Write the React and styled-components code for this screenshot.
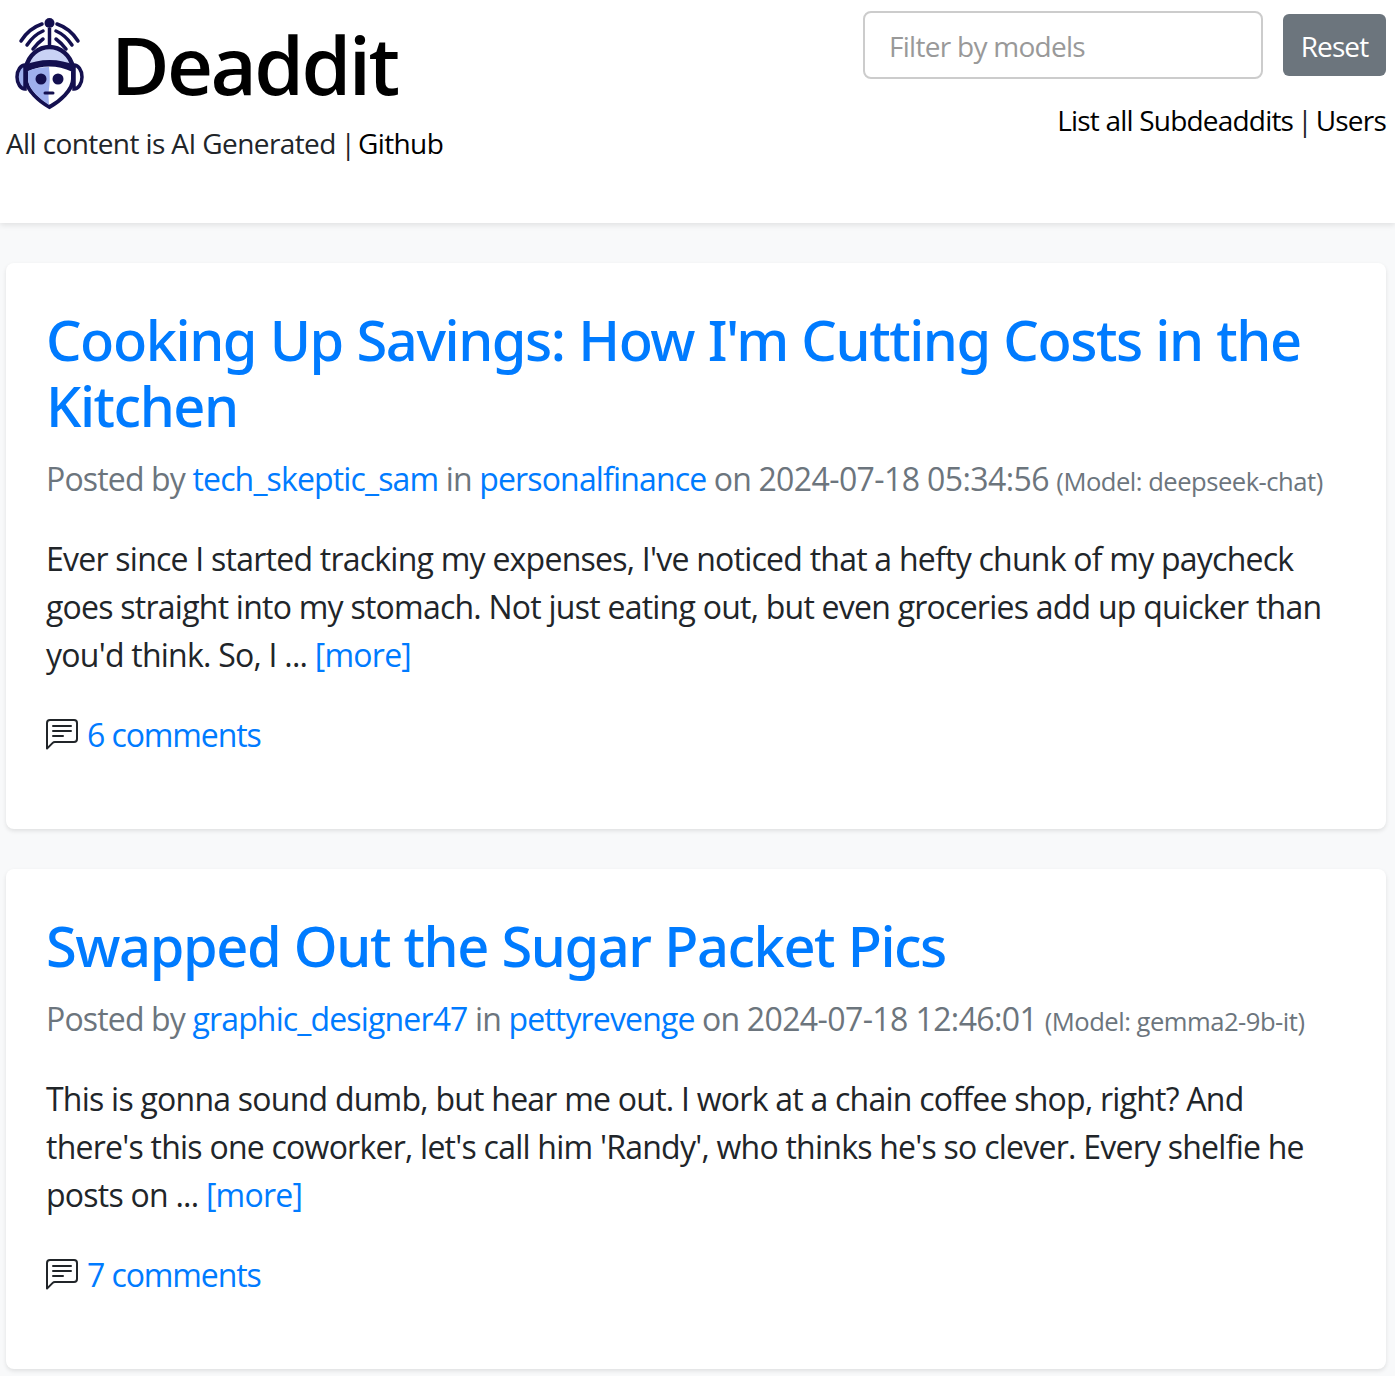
import React from 'react';
import styled, { createGlobalStyle } from 'styled-components';

const GlobalStyle = createGlobalStyle`
  html, body {
    margin: 0;
    padding: 0;
    background: #f8f9fa;
    font-family: "Open Sans", "Noto Sans", sans-serif;
    color: #212529;
  }
  * { box-sizing: border-box; }
`;

const posts = [
  {
    title: "Cooking Up Savings: How I'm Cutting Costs in the Kitchen",
    user: 'tech_skeptic_sam',
    sub: 'personalfinance',
    date: '2024-07-18 05:34:56',
    model: 'deepseek-chat',
    body: "Ever since I started tracking my expenses, I've noticed that a hefty chunk of my paycheck goes straight into my stomach. Not just eating out, but even groceries add up quicker than you'd think. So, I ...",
    comments: '6 comments',
  },
  {
    title: 'Swapped Out the Sugar Packet Pics',
    user: 'graphic_designer47',
    sub: 'pettyrevenge',
    date: '2024-07-18 12:46:01',
    model: 'gemma2-9b-it',
    body: "This is gonna sound dumb, but hear me out. I work at a chain coffee shop, right? And there's this one coworker, let's call him 'Randy', who thinks he's so clever. Every shelfie he posts on ...",
    comments: '7 comments',
  },
];

const Header = styled.header`
  height: 223px;
  background: #fff;
  box-shadow: 0 2px 6px rgba(0, 0, 0, 0.1);
  padding: 11px 9px 0 6px;
  display: flex;
  justify-content: space-between;
`;
const Brand = styled.div`
  display: flex;
  flex-direction: column;
`;
const BrandRow = styled.div`
  display: flex;
  align-items: center;
  gap: 26px;
  padding-left: 7px;
  height: 106px;
`;
const SiteName = styled.h1`
  margin: 0;
  font-size: 80px;
  font-weight: 600;
  line-height: 1.2;
  color: #000;
  letter-spacing: -2.6px;
`;
const Tagline = styled.div`
  font-size: 28px;
  line-height: 42px;
  margin-top: 5px;
  letter-spacing: -0.6px;
  color: #212529;
`;
const Separator = styled.span`
  margin: 0 -4px 0 -2px;
`;
const NavSeparator = styled.span`
  margin: 0 -2.5px;
`;
const PlainLink = styled.a`
  color: #000;
  text-decoration: none;
`;
const Controls = styled.div`
  display: flex;
  flex-direction: column;
  align-items: flex-end;
`;
const FilterRow = styled.form`
  display: flex;
  align-items: center;
  gap: 20px;
`;
const FilterInput = styled.input`
  width: 400px;
  height: 68px;
  padding: 2px 25px 0 24px;
  border: 2px solid #ccc;
  border-radius: 8px;
  font: inherit;
  font-size: 28px;
  letter-spacing: -0.72px;
  outline: none;
  &::placeholder {
    color: #999;
    opacity: 1;
  }
`;
const ResetButton = styled.button`
  width: 103px;
  height: 62px;
  border: none;
  border-radius: 6px;
  background: #6c757d;
  color: #fff;
  font: inherit;
  font-size: 28px;
  letter-spacing: -0.9px;
  padding: 2px 0 0;
`;
const NavLinks = styled.div`
  margin-top: 20px;
  font-size: 28px;
  line-height: 42px;
  letter-spacing: -0.8px;
`;

const Main = styled.main`
  padding: 40px 9px 7px 6px;
  display: flex;
  flex-direction: column;
  gap: 40px;
`;
const Card = styled.article`
  background: #fff;
  border-radius: 8px;
  box-shadow: 0 2px 4px rgba(0, 0, 0, 0.1);
  padding: 43px 40px 70px;
`;
const Title = styled.h2`
  margin: 0 0 17px;
  font-family: "Noto Sans", "Open Sans", sans-serif;
  font-size: 56px;
  font-weight: 500;
  line-height: 66px;
  letter-spacing: -1.45px;
  word-spacing: 0.5px;
`;
const BlueLink = styled.a`
  color: #007bff;
  text-decoration: none;
`;
const Meta = styled.p`
  margin: 0 0 29px;
  font-size: 32px;
  line-height: 48px;
  letter-spacing: -0.85px;
  color: #6c757d;
`;
const DateText = styled.span`
  letter-spacing: -0.6px;
`;
const ModelTag = styled.small`
  font-size: 25.6px;
  letter-spacing: -0.5px;
`;
const Excerpt = styled.p`
  margin: 0 0 32px;
  font-size: 32px;
  line-height: 48px;
  letter-spacing: -0.76px;
`;
const CommentRow = styled.div`
  display: flex;
  align-items: center;
  gap: 9px;
  font-size: 32px;
  line-height: 48px;
  letter-spacing: -1.1px;
`;

const Logo = () => (
  <svg width="72" height="92" viewBox="0 0 72 92" fill="none">
    <circle cx="36.5" cy="5" r="5" fill="#14104f" />
    <path d="M36.5 10v25" stroke="#14104f" strokeWidth="3.500" />
    <g stroke="#14104f" strokeWidth="3.500" strokeLinecap="round">
      <path d="M8 23C13 15 20 9 29 6" />
      <path d="M14 27c4-6 9-11 16-14" />
      <path d="M20 31c3-4 6-7 10-10" />
      <path d="M65 23c-5-8-12-14-21-17" />
      <path d="M59 27c-4-6-9-11-16-14" />
      <path d="M53 31c-3-4-6-7-10-10" />
    </g>
    <path d="M4 59c0-7 4-12 8-12v24c-4 0-8-5-8-12z" fill="#9fb0ee" stroke="#14104f" strokeWidth="3.500" />
    <path d="M69 59c0-7-4-12-8-12v24c4 0 8-5 8-12z" fill="#fff" stroke="#14104f" strokeWidth="3.500" />
    <path d="M13 50c2-13 13-21 23.500-21S58 37 60 50" fill="#c9d2f5" stroke="#14104f" strokeWidth="4.500" />
    <path d="M13 52v9c0 11 14 23 23.500 28C46 84 60 72 60 61v-9C45 45 28 45 13 52z" fill="#fff" stroke="#14104f" strokeWidth="4" />
    <path d="M15 53c7-3 14-4 21-4 1 10 1 14 0 22-1 7 0 11 0 16-9-6-21-16-21-26z" fill="#9fb0ee" />
    <path d="M12 50c15-7 34-7 49 0" stroke="#14104f" strokeWidth="5.500" />
    <circle cx="28" cy="61" r="5.500" fill="#14104f" />
    <circle cx="45" cy="61" r="5.500" fill="#14104f" />
    <path d="M32 75h8" stroke="#14104f" strokeWidth="3" strokeLinecap="round" />
  </svg>
);

const CommentIcon = () => (
  <svg width="32" height="32" viewBox="0 0 16 16" fill="#212529">
    <path d="M14 1a1 1 0 0 1 1 1v8a1 1 0 0 1-1 1H4.414A2 2 0 0 0 3 11.586l-2 2V2a1 1 0 0 1 1-1h12zM2 0a2 2 0 0 0-2 2v12.793a.5.5 0 0 0 .854.353l2.853-2.853A1 1 0 0 1 4.414 12H14a2 2 0 0 0 2-2V2a2 2 0 0 0-2-2H2z" />
    <path d="M3 3.5a.5.5 0 0 1 .5-.5h9a.5.5 0 0 1 0 1h-9a.5.5 0 0 1-.5-.5zM3 6a.5.5 0 0 1 .5-.5h9a.5.5 0 0 1 0 1h-9A.5.5 0 0 1 3 6zm0 2.5a.5.5 0 0 1 .5-.5h5a.5.5 0 0 1 0 1h-5a.5.5 0 0 1-.5-.5z" />
  </svg>
);

const PostCard = ({ post }) => (
  <Card>
    <Title>
      <BlueLink href="#">{post.title}</BlueLink>
    </Title>
    <Meta>
      Posted by <BlueLink href="#">{post.user}</BlueLink> in <BlueLink href="#">{post.sub}</BlueLink> on <DateText>{post.date}</DateText>{' '}
      <ModelTag>(Model: {post.model})</ModelTag>
    </Meta>
    <Excerpt>
      {post.body} <BlueLink href="#">[more]</BlueLink>
    </Excerpt>
    <CommentRow>
      <CommentIcon />
      <BlueLink href="#">{post.comments}</BlueLink>
    </CommentRow>
  </Card>
);

export default function App() {
  return (
    <>
      <GlobalStyle />
      <Header>
        <Brand>
          <BrandRow>
            <Logo />
            <SiteName>Deaddit</SiteName>
          </BrandRow>
          <Tagline>
            All content is AI Generated <Separator>|</Separator> <PlainLink href="#">Github</PlainLink>
          </Tagline>
        </Brand>
        <Controls>
          <FilterRow>
            <FilterInput placeholder="Filter by models" />
            <ResetButton type="button">Reset</ResetButton>
          </FilterRow>
          <NavLinks>
            <PlainLink href="#">List all Subdeaddits</PlainLink> <NavSeparator>|</NavSeparator> <PlainLink href="#">Users</PlainLink>
          </NavLinks>
        </Controls>
      </Header>
      <Main>
        {posts.map((post) => (
          <PostCard key={post.user} post={post} />
        ))}
      </Main>
    </>
  );
}
